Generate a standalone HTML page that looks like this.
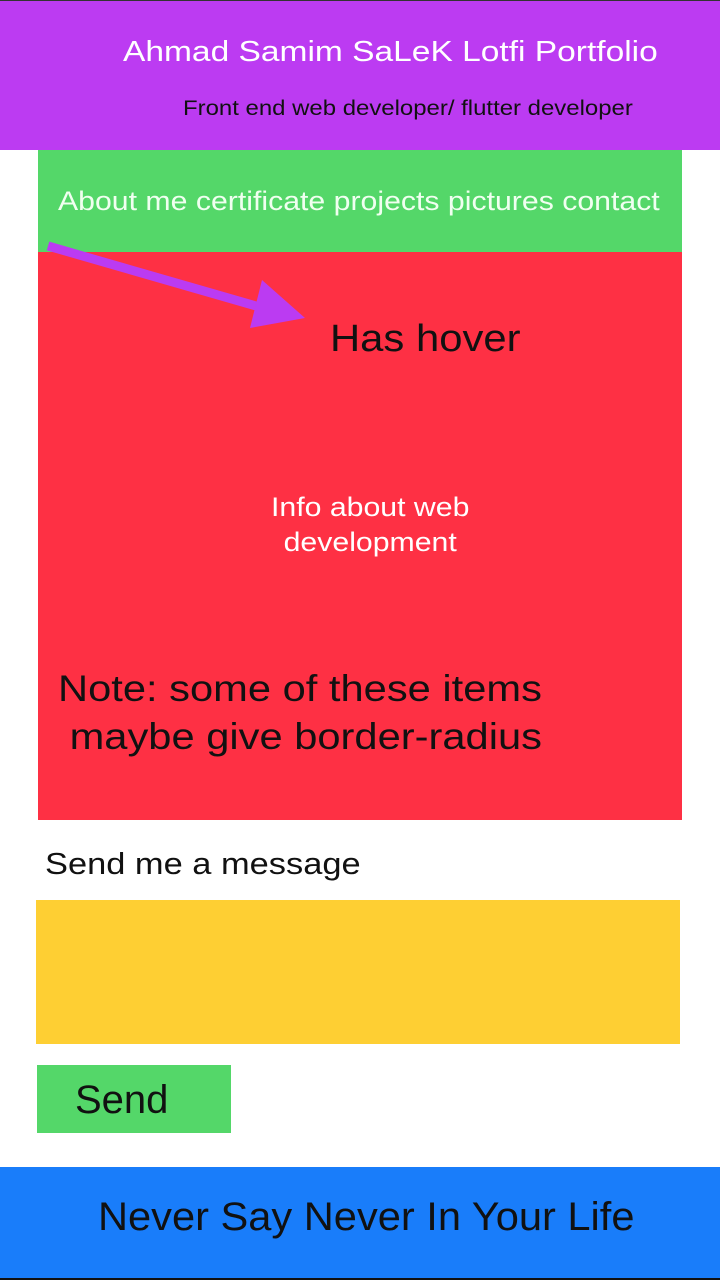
<!DOCTYPE html>
<html><head><style>
body{margin:0;width:720px;height:1280px;position:relative;background:#fff;font-family:"Liberation Sans",sans-serif;overflow:hidden}
div{position:absolute}
.t{white-space:nowrap;transform-origin:0 0}
</style></head><body>
<div style="left:0;top:0;width:720px;height:150px;background:#bc3bf2;border-top:1px solid #333;box-sizing:border-box"></div>
<div class="t" style="left:123px;top:36px;font-size:29px;color:#fff;transform:scaleX(1.156)">Ahmad Samim SaLeK Lotfi Portfolio</div>
<div class="t" style="left:183px;top:97px;font-size:21px;color:#111;transform:scaleX(1.14)">Front end web developer/ flutter developer</div>
<div style="left:38px;top:150px;width:644px;height:102px;background:#54d769"></div>
<div class="t" style="left:58px;top:186px;font-size:27px;color:#f0fff0;transform:scaleX(1.12)">About me certificate projects pictures contact</div>
<div style="left:38px;top:252px;width:644px;height:568px;background:#fe3044"></div>
<svg style="position:absolute;left:0;top:0" width="720" height="400"><line x1="48" y1="246" x2="270" y2="310" stroke="#bb3bf2" stroke-width="9"/><polygon points="262,280 305,318 250,328" fill="#bb3bf2"/></svg>
<div class="t" style="left:330px;top:318px;font-size:38px;color:#111;transform:scaleX(1.1)">Has hover</div>
<div class="t" style="left:271px;top:490px;font-size:27px;color:#fff;line-height:35px;text-align:center;transform:scaleX(1.12)">Info about web<br>development</div>
<div class="t" style="left:58px;top:665px;font-size:37px;color:#111;line-height:48px;transform:scaleX(1.126)">Note: some of these items<br>&nbsp;maybe give border-radius</div>
<div class="t" style="left:45px;top:846px;font-size:31px;color:#111;transform:scaleX(1.11)">Send me a message</div>
<div style="left:36px;top:900px;width:644px;height:144px;background:#fecf33"></div>
<div style="left:37px;top:1065px;width:194px;height:68px;background:#54d769"></div>
<div class="t" style="left:75px;top:1078px;font-size:40px;color:#111">Send</div>
<div style="left:0;top:1167px;width:720px;height:113px;background:#197dfa;border-bottom:2px solid #111;box-sizing:border-box"></div>
<div class="t" style="left:98px;top:1195px;font-size:40px;color:#111;transform:scaleX(1.04)">Never Say Never In Your Life</div>
</body></html>
